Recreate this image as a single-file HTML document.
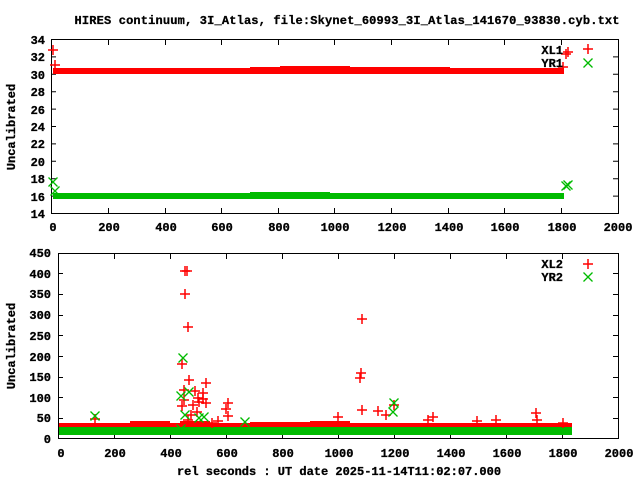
<!DOCTYPE html>
<html><head><meta charset="utf-8"><style>
html,body{margin:0;padding:0;background:#fff;width:640px;height:480px;overflow:hidden}
svg text{font-family:"Liberation Mono",monospace;font-weight:bold;font-size:12px;fill:#000;stroke:#000;stroke-width:0.3}
</style></head><body>
<svg width="640" height="480" viewBox="0 0 640 480" xmlns="http://www.w3.org/2000/svg">
<defs>
<path id="p" d="M-5 0H5M0 -5V5" stroke="#f00" stroke-width="1.5" fill="none"/>
<path id="x" d="M-4.5 -4.5L4.5 4.5M-4.5 4.5L4.5 -4.5" stroke="#0b0" stroke-width="1.3" fill="none"/>
</defs>
<text x="347" y="24" text-anchor="middle" textLength="545">HIRES continuum, 3I_Atlas, file:Skynet_60993_3I_Atlas_141670_93830.cyb.txt</text>

<!-- TOP PLOT -->
<g stroke="#000" stroke-width="1" fill="none">
<rect x="51.5" y="39.5" width="567" height="174"/>
<path d="M51 213.5h5M51 196.1h5M51 178.7h5M51 161.3h5M51 143.9h5M51 126.5h5M51 109.1h5M51 91.7h5M51 74.3h5M51 56.9h5M51 39.5h5
M618 196.1h-5M618 178.7h-5M618 161.3h-5M618 143.9h-5M618 126.5h-5M618 109.1h-5M618 91.7h-5M618 74.3h-5M618 56.9h-5
M108.5 213v-5M165.5 213v-5M221.5 213v-5M278.5 213v-5M334.5 213v-5M391.5 213v-5M448.5 213v-5M504.5 213v-5M561.5 213v-5
M108.5 40v5M165.5 40v5M221.5 40v5M278.5 40v5M334.5 40v5M391.5 40v5M448.5 40v5M504.5 40v5M561.5 40v5"/>
</g>
<g text-anchor="end">
<text x="45" y="218">14</text><text x="45" y="201">16</text><text x="45" y="183">18</text><text x="45" y="166">20</text><text x="45" y="148">22</text><text x="45" y="131">24</text><text x="45" y="114">26</text><text x="45" y="96">28</text><text x="45" y="79">30</text><text x="45" y="61">32</text><text x="45" y="44">34</text>
</g>
<g text-anchor="middle">
<text x="53" y="231">0</text><text x="109" y="231">200</text><text x="166" y="231">400</text><text x="222" y="231">600</text><text x="279" y="231">800</text><text x="335" y="231">1000</text><text x="392" y="231">1200</text><text x="449" y="231">1400</text><text x="505" y="231">1600</text><text x="562" y="231">1800</text><text x="618" y="231">2000</text>
</g>
<text transform="translate(15,127) rotate(-90)" text-anchor="middle">Uncalibrated</text>
<rect x="53" y="68" width="511" height="6" fill="#f00"/>
<rect x="250" y="67" width="200" height="2" fill="#f00"/>
<rect x="280" y="66" width="70" height="2" fill="#f00"/>
<rect x="53" y="193" width="511" height="6" fill="#0b0"/>
<rect x="250" y="192" width="80" height="2" fill="#0b0"/>
<use href="#p" x="53" y="50"/><use href="#p" x="55" y="65"/>
<use href="#p" x="566" y="54"/><use href="#p" x="568" y="52"/><use href="#p" x="563" y="67"/>
<use href="#x" x="53" y="182"/><use href="#x" x="55" y="191"/>
<use href="#x" x="566" y="186"/><use href="#x" x="568" y="185"/>
<text x="563" y="54" text-anchor="end">XL1</text><use href="#p" x="588" y="49"/>
<text x="563" y="67" text-anchor="end">YR1</text><use href="#x" x="588" y="63"/>

<!-- BOTTOM PLOT -->
<g stroke="#000" stroke-width="1" fill="none">
<rect x="58.5" y="253.5" width="560" height="185"/>
<path d="M58 418.5h5M58 397.5h5M58 377.5h5M58 356.5h5M58 335.5h5M58 315.5h5M58 294.5h5M58 273.5h5
M618 418.5h-5M618 397.5h-5M618 377.5h-5M618 356.5h-5M618 335.5h-5M618 315.5h-5M618 294.5h-5M618 273.5h-5
M114.5 438v-5M170.5 438v-5M226.5 438v-5M282.5 438v-5M338.5 438v-5M394.5 438v-5M450.5 438v-5M506.5 438v-5M562.5 438v-5
M114.5 254v5M170.5 254v5M226.5 254v5M282.5 254v5M338.5 254v5M394.5 254v5M450.5 254v5M506.5 254v5M562.5 254v5"/>
</g>
<g text-anchor="end">
<text x="51" y="443">0</text><text x="51" y="422">50</text><text x="51" y="402">100</text><text x="51" y="381">150</text><text x="51" y="361">200</text><text x="51" y="340">250</text><text x="51" y="319">300</text><text x="51" y="298">350</text><text x="51" y="278">400</text><text x="51" y="257">450</text>
</g>
<g text-anchor="middle">
<text x="61" y="457">0</text><text x="115" y="457">200</text><text x="171" y="457">400</text><text x="227" y="457">600</text><text x="283" y="457">800</text><text x="339" y="457">1000</text><text x="395" y="457">1200</text><text x="451" y="457">1400</text><text x="507" y="457">1600</text><text x="563" y="457">1800</text><text x="619" y="457">2000</text>
</g>
<text transform="translate(15,346) rotate(-90)" text-anchor="middle">Uncalibrated</text>
<text x="339" y="475" text-anchor="middle">rel seconds : UT date 2025-11-14T11:02:07.000</text>
<rect x="59" y="423" width="513" height="5" fill="#f00"/>
<rect x="59" y="427" width="513" height="8" fill="#0b0"/>
<rect x="130" y="421" width="40" height="3" fill="#f00"/><rect x="310" y="421" width="40" height="3" fill="#f00"/>
<rect x="180" y="421" width="30" height="3" fill="#f00"/><rect x="250" y="422" width="60" height="2" fill="#f00"/>
<g>
<use href="#p" x="185" y="271"/><use href="#p" x="187" y="271"/><use href="#p" x="185" y="294"/><use href="#p" x="188" y="327"/>
<use href="#p" x="182" y="364"/><use href="#p" x="189" y="380"/><use href="#p" x="206" y="383"/><use href="#p" x="184" y="390"/>
<use href="#p" x="195" y="391"/><use href="#p" x="203" y="393"/><use href="#p" x="198" y="398"/><use href="#p" x="184" y="400"/>
<use href="#p" x="203" y="399"/><use href="#p" x="199" y="402"/><use href="#p" x="193" y="405"/><use href="#p" x="182" y="406"/>
<use href="#p" x="197" y="412"/><use href="#p" x="188" y="420"/><use href="#p" x="191" y="415"/><use href="#p" x="206" y="403"/>
<use href="#p" x="228" y="403"/><use href="#p" x="226" y="409"/><use href="#p" x="228" y="416"/><use href="#p" x="218" y="421"/>
<use href="#p" x="212" y="423"/><use href="#p" x="95" y="419"/>
<use href="#p" x="362" y="319"/><use href="#p" x="361" y="373"/><use href="#p" x="360" y="378"/><use href="#p" x="362" y="410"/>
<use href="#p" x="394" y="405"/><use href="#p" x="378" y="411"/><use href="#p" x="338" y="417"/><use href="#p" x="386" y="415"/>
<use href="#p" x="428" y="420"/><use href="#p" x="433" y="417"/><use href="#p" x="477" y="421"/><use href="#p" x="496" y="420"/>
<use href="#p" x="536" y="413"/><use href="#p" x="537" y="420"/><use href="#p" x="563" y="423"/>
<use href="#x" x="183" y="358"/><use href="#x" x="189" y="392"/><use href="#x" x="181" y="396"/><use href="#x" x="185" y="415"/>
<use href="#x" x="199" y="418"/><use href="#x" x="204" y="417"/><use href="#x" x="95" y="416"/><use href="#x" x="245" y="422"/>
<use href="#x" x="394" y="403"/><use href="#x" x="393" y="412"/><use href="#x" x="181" y="429"/>
</g>
<text x="563" y="268" text-anchor="end">XL2</text><use href="#p" x="588" y="264"/>
<text x="563" y="281" text-anchor="end">YR2</text><use href="#x" x="588" y="277"/>
</svg>
</body></html>
